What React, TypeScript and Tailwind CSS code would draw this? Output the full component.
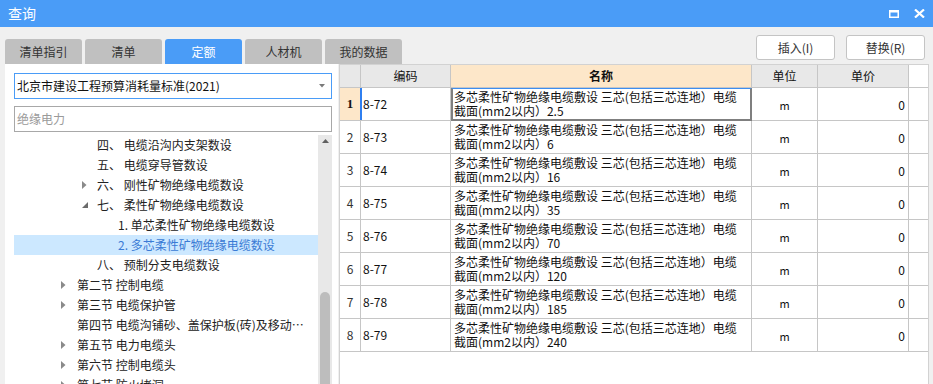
import React from 'react';

const ui = { fontFamily: '"Noto Sans CJK SC", "Noto Sans", sans-serif' };

const tabs = ['清单指引', '清单', '定额', '人材机', '我的数据'];

type TreeRow = { text: string; level: 0 | 1 | 2; arrow?: 'right' | 'down'; selected?: boolean };

const tree: TreeRow[] = [
  { text: '四、 电缆沿沟内支架数设', level: 1 },
  { text: '五、 电缆穿导管数设', level: 1 },
  { text: '六、 刚性矿物绝缘电缆数设', level: 1, arrow: 'right' },
  { text: '七、 柔性矿物绝缘电缆数设', level: 1, arrow: 'down' },
  { text: '1. 单芯柔性矿物绝缘电缆数设', level: 2 },
  { text: '2. 多芯柔性矿物绝缘电缆数设', level: 2, selected: true },
  { text: '八、 预制分支电缆数设', level: 1 },
  { text: '第二节 控制电缆', level: 0, arrow: 'right' },
  { text: '第三节 电缆保护管', level: 0, arrow: 'right' },
  { text: '第四节 电缆沟铺砂、盖保护板(砖)及移动盖板', level: 0 },
  { text: '第五节 电力电缆头', level: 0, arrow: 'right' },
  { text: '第六节 控制电缆头', level: 0, arrow: 'right' },
  { text: '第七节 防火堵洞', level: 0, arrow: 'right' },
];

const rows = [
  { code: '8-72', size: '2.5' },
  { code: '8-73', size: '6' },
  { code: '8-74', size: '16' },
  { code: '8-75', size: '35' },
  { code: '8-76', size: '70' },
  { code: '8-77', size: '120' },
  { code: '8-78', size: '185' },
  { code: '8-79', size: '240' },
];

function Arrow({ dir }: { dir: 'right' | 'down' }) {
  if (dir === 'right') {
    return (
      <svg width="5" height="8" viewBox="0 0 5 8">
        <path d="M0 0 L4.5 4 L0 8 Z" fill="#8a8a8a" />
      </svg>
    );
  }
  return (
    <svg width="6" height="6" viewBox="0 0 6 6">
      <path d="M6 0 L6 6 L0 6 Z" fill="#6b6b6b" />
    </svg>
  );
}

function TreeItem({ row }: { row: TreeRow }) {
  const textLeft = row.level === 0 ? 'pl-[63px]' : row.level === 1 ? 'pl-[83px]' : 'pl-[104px]';
  const arrowLeft = row.level === 0 ? 'left-[47px]' : 'left-[68px]';
  return (
    <div
      className={`relative flex h-[20px] shrink-0 items-center text-[12px] ${textLeft} ${
        row.selected ? 'bg-[#cce8ff] text-[#3a7bd5]' : 'text-[#222]'
      }`}
    >
      {row.arrow && (
        <span className={`absolute top-0 flex h-[20px] items-center ${arrowLeft}`}>
          <Arrow dir={row.arrow} />
        </span>
      )}
      <span className="block max-w-[228px] truncate whitespace-nowrap">{row.text}</span>
    </div>
  );
}

export default function App() {
  return (
    <div className="flex h-[384px] w-[933px] flex-col overflow-hidden bg-[#f0f0f0]" style={ui}>
      {/* Title bar */}
      <div className="flex h-[27px] shrink-0 items-center justify-between bg-[#4a9cf7] pl-[8px] pr-[8px]">
        <span className="text-[14px] text-white">查询</span>
        <div className="flex items-center gap-[15px]">
          <svg width="10" height="8" viewBox="0 0 10 8">
            <rect x="0.75" y="1" width="8.5" height="6.25" fill="none" stroke="white" strokeWidth="1.5" />
            <rect x="0" y="0" width="10" height="2.5" fill="white" />
          </svg>
          <svg width="11" height="9" viewBox="0 0 11 9">
            <path d="M1 0.5 L10 8.5 M10 0.5 L1 8.5" stroke="white" strokeWidth="2.2" />
          </svg>
        </div>
      </div>

      <div className="flex min-h-0 flex-1 pl-[5px]">
        {/* Left column */}
        <div className="flex w-[333px] shrink-0 flex-col">
          <div className="relative z-10 mt-[12px] flex h-[25px] shrink-0 gap-[3px]">
            {tabs.map((t) => (
              <div
                key={t}
                className={`flex w-[77px] shrink-0 items-center justify-center rounded-t-[3px] text-[12px] ${
                  t === '定额' ? 'bg-[#4a9cf7] text-white' : 'bg-[#c0c0c0] text-[#333]'
                }`}
              >
                {t}
              </div>
            ))}
          </div>
          <div className="flex min-h-0 flex-1 flex-col bg-white pl-[9px] pr-[6px] pt-[9px]">
            <div className="flex h-[26px] shrink-0 items-center justify-between border border-[#4a9cf7] pl-[2px] pr-[6px] text-[12px] text-[#111]">
              <span>北京市建设工程预算消耗量标准(2021)</span>
              <svg width="6" height="4" viewBox="0 0 6 4">
                <path d="M0 0 L6 0 L3 3.5 Z" fill="#7a7a7a" />
              </svg>
            </div>
            <div className="mt-[7px] flex h-[26px] shrink-0 items-center border border-[#a8a8a8] pl-[2px] text-[12px] text-[#9a9a9a]">
              绝缘电力
            </div>
            <div className="mt-[3px] flex min-h-0 flex-1">
              <div className="flex min-w-0 flex-1 flex-col overflow-hidden">
                {tree.map((r) => (
                  <TreeItem key={r.text} row={r} />
                ))}
              </div>
              <div className="flex w-[14px] flex-col items-center bg-[#e8e8e8]">
                <svg className="mt-[4px]" width="7" height="4" viewBox="0 0 7 4">
                  <path d="M0 4 L3.5 0 L7 4 Z" fill="#606060" />
                </svg>
                <div className="mt-[149px] w-[10px] flex-1 rounded-t-[5px] bg-[#bdbdbd]" />
              </div>
            </div>
          </div>
        </div>

        {/* Right column */}
        <div className="ml-[1px] flex w-[590px] flex-col">
          <div className="mt-[8px] flex h-[25px] shrink-0 justify-end gap-[11px] pr-[4px]">
            {['插入(I)', '替换(R)'].map((b) => (
              <div
                key={b}
                className="flex w-[79px] items-center justify-center rounded-[3px] border border-[#c4c4c4] bg-white text-[12px] text-[#333]"
              >
                {b}
              </div>
            ))}
          </div>
          <div className="mt-[4px] min-h-0 flex-1 border border-b-0 border-[#d2d2d2] bg-white text-[12px] text-[#111]">
            {/* Header */}
            <div className="flex h-[23px] border-b border-[#c6c6c6]">
              <div className="w-[21px] border-r border-[#c6c6c6] bg-[#e8e8e8]" />
              <div className="flex w-[90px] items-center justify-center border-r border-[#c6c6c6] bg-[#e8e8e8]">编码</div>
              <div className="flex w-[301px] items-center justify-center border-r border-[#c6c6c6] bg-[#fde7c9] font-bold">名称</div>
              <div className="flex w-[66px] items-center justify-center border-r border-[#c6c6c6] bg-[#e8e8e8]">单位</div>
              <div className="flex w-[91px] items-center justify-center border-r border-[#c6c6c6] bg-[#e8e8e8]">单价</div>
            </div>
            {rows.map((r, i) => (
              <div key={r.code} className="flex h-[33px] border-b border-[#c6c6c6]">
                <div
                  className={`flex w-[21px] items-center justify-center border-r border-[#c6c6c6] ${
                    i === 0 ? 'bg-[#fde7c9] font-bold text-[13px]' : 'text-[#333]'
                  }`}
                  style={i === 0 ? { fontFamily: '"Liberation Serif", serif' } : undefined}
                >
                  {i + 1}
                </div>
                <div className="relative flex w-[90px] items-center border-r border-[#c6c6c6] pl-[2px]">
                  {i === 0 && <span className="absolute bottom-0 left-[-1px] top-0 w-[2px] bg-[#2f7ff0]" />}
                  {r.code}
                </div>
                <div className="relative flex w-[301px] flex-col border-r border-[#c6c6c6] pl-[3px] pt-[2px]">
                  {i === 0 && (
                    <span className="absolute -bottom-px -right-px left-0 top-0 border-2 border-t border-[#7f7f7f] border-t-[#3d8ef0]" />
                  )}
                  <div className="h-[14px] whitespace-nowrap leading-[14px]">多芯柔性矿物绝缘电缆敷设 三芯(包括三芯连地）电缆</div>
                  <div className="h-[14px] whitespace-nowrap leading-[14px]">截面(mm2以内）{r.size}</div>
                </div>
                <div className="flex w-[66px] items-center justify-center border-r border-[#c6c6c6] pt-[2px] text-[11px]">m</div>
                <div className="flex w-[91px] items-center justify-end border-r border-[#c6c6c6] pr-[3px] pt-[2px]">0</div>
              </div>
            ))}
          </div>
        </div>
      </div>
    </div>
  );
}
